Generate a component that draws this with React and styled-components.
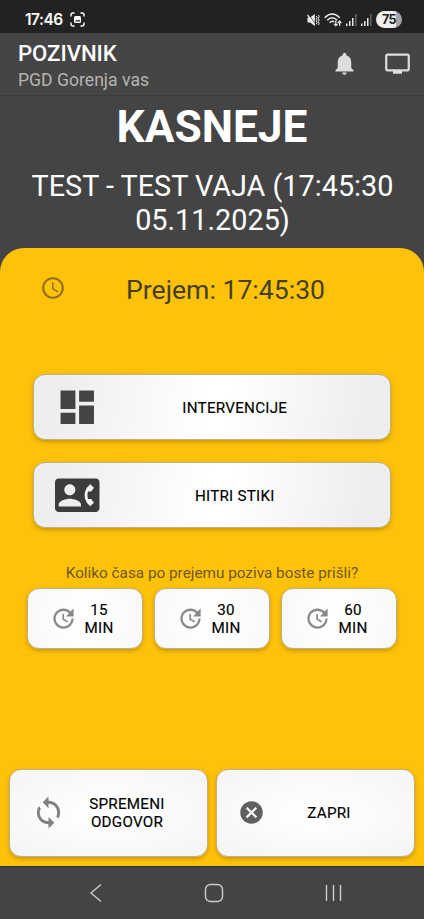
import React from 'react';
import styled, { createGlobalStyle } from 'styled-components';
import {
  MdNotifications, MdTv, MdAccessTime, MdDashboard, MdContactPhone, MdUpdate, MdSync, MdCancel,
} from 'react-icons/md';

const GlobalStyle = createGlobalStyle`
  * { box-sizing: border-box; }
  body { margin: 0; background: #444444; font-family: Roboto, sans-serif; }
  button { font: inherit; color: inherit; }
`;

const Screen = styled.div`
  width: 424px;
  height: 919px;
  display: flex;
  flex-direction: column;
  background: #444444;
  overflow: hidden;
`;

const StatusBar = styled.div`
  height: 33px;
  flex: none;
  display: flex;
  align-items: center;
  justify-content: space-between;
  padding: 6px 22px 0 25px;
  background: #222222;
  color: #ffffff;
`;

const StatusGroup = styled.div`
  display: flex;
  align-items: center;
  gap: ${(p) => p.$gap}px;
`;

const Clock = styled.span`
  font: 600 15.5px/20px Inter, sans-serif;
  letter-spacing: -0.5px;
`;

const Battery = styled.span`
  width: 26px;
  height: 17px;
  border-radius: 9px;
  background: linear-gradient(90deg, #eeeeee 75%, #a5a5a5 75%);
  color: #222222;
  font: 700 12.5px/17px Inter, sans-serif;
  letter-spacing: -0.5px;
  text-align: center;
`;

const AppBar = styled.header`
  height: 63px;
  flex: none;
  display: flex;
  justify-content: space-between;
  padding: 7px 13px 0 18px;
  background: #454545;
  border-bottom: 1px solid #3c3c3c;
`;

const AppTitle = styled.h1`
  margin: 0;
  color: #ffffff;
  font-size: 22.2px;
  font-weight: 500;
  line-height: 27px;
  letter-spacing: -0.05px;
`;

const AppSubtitle = styled.div`
  color: #b4b4b4;
  font-size: 17.6px;
  line-height: 26px;
`;

const AppActions = styled.div`
  display: flex;
  gap: 26px;
  padding-top: 10px;
  height: 37px;
  color: #dddddd;
`;

const Summary = styled.section`
  height: 152px;
  flex: none;
  color: #ffffff;
  text-align: center;
`;

const Response = styled.h2`
  margin: 0;
  padding-top: 5px;
  font-size: 44.3px;
  font-weight: 700;
  line-height: 52px;
`;

const EventName = styled.p`
  margin: 16px 19px 0 20px;
  font-size: 28.8px;
  line-height: 34px;
`;

const Panel = styled.main`
  flex: 1;
  display: flex;
  flex-direction: column;
  padding: 0 9px 9px;
  border-radius: 24px 24px 0 0;
  background: #ffc20a;
`;

const Received = styled.div`
  height: 80px;
  display: flex;
  align-items: center;
  padding-left: 31px;
  color: #8e701a;
`;

const ReceivedText = styled.span`
  margin: 3px 0 0 60px;
  color: #444022;
  font-size: 26.6px;
  line-height: 32px;
`;

const Button = styled.button`
  display: flex;
  align-items: center;
  padding: 0;
  border: 1px solid #bdb28a;
  border-radius: 12px;
  color: #000000;
  font-size: 15.2px;
  font-weight: 400;
  line-height: 18px;
  letter-spacing: 0.25px;
  text-align: center;
  -webkit-text-stroke: 0.15px #000000;
  box-shadow: 0 2px 4px rgba(110, 80, 0, 0.38);
`;

const Menu = styled.nav`
  display: flex;
  flex-direction: column;
  gap: 22px;
  margin: 46px 24px 0;
`;

const MenuButton = styled(Button)`
  height: 66px;
  padding-left: 21px;
  background: linear-gradient(100deg, #eeeeee 8%, #ffffff 48%, #ffffff 54%, #eeeeee 92%);
`;

const MenuLabel = styled.span`
  flex: 1;
  padding: 2px 87px 0 67px;
`;

const IconSlot = styled.span`
  display: flex;
  color: ${(p) => p.$color};
  margin-left: ${(p) => p.$left || 0}px;
  margin-bottom: ${(p) => p.$lift || 0}px;
`;

const Question = styled.div`
  margin-top: 35px;
  color: #70581a;
  font-size: 15.3px;
  line-height: 20px;
  text-align: center;
`;

const DelayRow = styled.div`
  display: grid;
  grid-template-columns: repeat(3, 116px);
  gap: 11px;
  margin: 5px 0 0 18px;
`;

const DelayButton = styled(Button)`
  height: 61px;
  padding: 0 0 0 21.5px;
  gap: 7.5px;
  background: radial-gradient(circle, #ffffff 20%, #f8f8f8 100%);
`;

const DelayLabel = styled.span`
  width: 30px;
`;

const FooterRow = styled.div`
  display: grid;
  grid-template-columns: 199px 199px;
  gap: 8px;
  margin-top: auto;
`;

const FooterButton = styled(Button)`
  height: 88px;
  background: radial-gradient(ellipse, #ffffff 10%, #f4f4f4 100%);
`;

const FooterLabel = styled.span`
  width: 90px;
  margin-left: ${(p) => p.$left}px;
`;

const SystemNav = styled.nav`
  height: 53px;
  flex: none;
  display: flex;
  justify-content: center;
  align-items: center;
  gap: 101px;
  padding: 0 0 1px 8px;
  background: #444444;
  border-top: 1px solid #333333;
`;

const Stroke = styled.svg`
  fill: none;
  stroke: #cccccc;
  stroke-width: 1.4;
`;

const Capture = () => (
  <svg width="15" height="15" viewBox="0 0 15 15" fill="none" stroke="#fff" strokeWidth="1.4" strokeLinecap="round">
    <path d="M1 4V3q0-2 2-2h1M11 1h1q2 0 2 2v1M14 11v1q0 2-2 2h-1M4 14H3q-2 0-2-2v-1" />
    <rect x="4" y="4" width="7" height="7" rx="1.5" fill="#fff" stroke="none" />
    <path d="M5 9.4l1.7-1.7 1.3 1 1.1-1.2 1 1.2v.7z" fill="#222" stroke="none" />
  </svg>
);

const Muted = () => (
  <svg width="13" height="14" viewBox="0 0 13 14" fill="none" stroke="#eee" strokeWidth="1.3">
    <path d="M.5 4.5h2.7L7.8 1v12L3.2 9.5H.5z" fill="#eee" stroke="none" />
    <path d="M1.5 1.2l7.6 10.8" stroke="#222" strokeWidth="0.7" />
    <path d="M.5 1.8l7.4 10.4" strokeWidth="1.2" />
    <path d="M9.3 3l.8 1.3-.8 1.4.8 1.3-.8 1.3.8 1.4-.8 1.3M11.3 2l.9 1.7-.9 1.6.9 1.7-.9 1.6.9 1.7-.9 1.7" strokeWidth="1" />
  </svg>
);

const Wifi = () => (
  <svg width="18" height="14" viewBox="0 0 18 14" fill="none" stroke="#eee" strokeWidth="1.5">
    <path d="M.7 4.7q7.5-7.4 15 0M3.2 7.2q5-4.9 10 0M5.6 9.7q2.5-2.4 4.6-.7" />
    <path d="M11.8 7.4v5M10 10.8l1.8 1.9 1.8-1.9M15.6 13V8.5M13.8 10l1.8-1.9L17.4 10" strokeWidth="1.2" />
  </svg>
);

const Signal = () => (
  <svg width="11" height="12" viewBox="0 0 11 12" fill="#e8e8e8">
    <path d="M0 9.5h1.5V12H0zM3 7h1.5v5H3zM6 4h1.5v8H6z" />
    <path d="M9 0h1.5v12H9z" fill="#666" />
  </svg>
);

const DELAYS = [15, 30, 60];

export default function App() {
  return (
    <>
      <GlobalStyle />
      <Screen>
        <StatusBar>
          <StatusGroup $gap={7}>
            <Clock>17:46</Clock>
            <Capture />
          </StatusGroup>
          <StatusGroup $gap={4}>
            <Muted />
            <Wifi />
            <Signal />
            <Signal />
            <Battery>75</Battery>
          </StatusGroup>
        </StatusBar>
        <AppBar>
          <div>
            <AppTitle>POZIVNIK</AppTitle>
            <AppSubtitle>PGD Gorenja vas</AppSubtitle>
          </div>
          <AppActions>
            <MdNotifications size={27} />
            <MdTv size={27} />
          </AppActions>
        </AppBar>
        <Summary>
          <Response>KASNEJE</Response>
          <EventName>TEST - TEST VAJA (17:45:30 05.11.2025)</EventName>
        </Summary>
        <Panel>
          <Received>
            <MdAccessTime size={26} />
            <ReceivedText>Prejem: 17:45:30</ReceivedText>
          </Received>
          <Menu>
            <MenuButton>
              <IconSlot $color="#444444"><MdDashboard size={44.5} /></IconSlot>
              <MenuLabel>INTERVENCIJE</MenuLabel>
            </MenuButton>
            <MenuButton>
              <IconSlot $color="#3c3c3c"><MdContactPhone size={44.5} /></IconSlot>
              <MenuLabel>HITRI STIKI</MenuLabel>
            </MenuButton>
          </Menu>
          <Question>Koliko časa po prejemu poziva boste prišli?</Question>
          <DelayRow>
            {DELAYS.map((minutes) => (
              <DelayButton key={minutes}>
                <IconSlot $color="#888888" $lift={1}><MdUpdate size={27} /></IconSlot>
                <DelayLabel>{minutes} MIN</DelayLabel>
              </DelayButton>
            ))}
          </DelayRow>
          <FooterRow>
            <FooterButton>
              <IconSlot $color="#808080" $left={21} $lift={2}><MdSync size={35} /></IconSlot>
              <FooterLabel $left={16}>SPREMENI ODGOVOR</FooterLabel>
            </FooterButton>
            <FooterButton>
              <IconSlot $color="#606060" $left={21} $lift={2}><MdCancel size={27} /></IconSlot>
              <FooterLabel $left={19}>ZAPRI</FooterLabel>
            </FooterButton>
          </FooterRow>
        </Panel>
        <SystemNav>
          <Stroke width="14" height="20" viewBox="0 0 14 20"><path d="M12 1.5L2 10l10 8.5" /></Stroke>
          <Stroke width="20" height="20" viewBox="0 0 20 20"><rect x="1.5" y="1.5" width="17" height="17" rx="5" /></Stroke>
          <Stroke width="18" height="18" viewBox="0 0 18 18"><path d="M1.5 1v16M8.5 1v16M15.5 1v16" /></Stroke>
        </SystemNav>
      </Screen>
    </>
  );
}
